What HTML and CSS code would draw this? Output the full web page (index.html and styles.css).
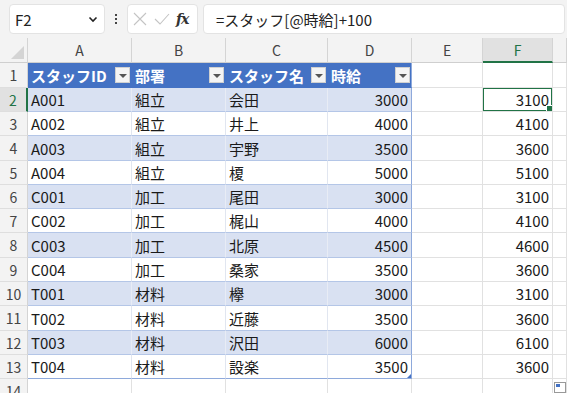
FILE: index.html
```html
<!DOCTYPE html>
<html lang="ja">
<head>
    <meta charset="UTF-8">
    <title>スタッフ</title>
    <link rel="stylesheet" href="styles.css">
</head>
<body>
    <div class="formula-bar">
        <div class="name-box">
            <span>F2</span>
            <svg width="10" height="7" viewBox="0 0 10 7"><path d="M1.5 1.5 L5 5 L8.5 1.5" fill="none" stroke="#222" stroke-width="1.6"/></svg>
        </div>
        <div class="dots"><i></i><i></i><i></i></div>
        <div class="fx-box">
            <svg width="16" height="16" viewBox="0 0 16 16"><path d="M2 2 L14 14 M14 2 L2 14" stroke="#c4c4c4" stroke-width="1.1"/></svg>
            <svg width="18" height="16" viewBox="0 0 18 16"><path d="M2 8 L7 13 L16 3" fill="none" stroke="#c4c4c4" stroke-width="1.1"/></svg>
            <span class="fx">fx</span>
        </div>
        <div class="formula">=スタッフ[@時給]+100</div>
    </div>

    <div class="sheet">
        <div class="row colhead">
            <div class="corner"><span class="tri"></span></div>
            <div>A</div><div>B</div><div>C</div><div>D</div><div>E</div><div class="sel">F</div><div></div>
        </div>

        <div class="row tall">
            <div class="rh">1</div>
            <div class="th">スタッフID<span class="filter"></span></div>
            <div class="th">部署<span class="filter"></span></div>
            <div class="th">スタッフ名<span class="filter"></span></div>
            <div class="th">時給<span class="filter"></span></div>
            <div></div><div></div><div></div>
        </div>
        <div class="row band">
            <div class="rh sel">2</div>
            <div class="t">A001</div><div class="t">組立</div><div class="t">会田</div><div class="t num">3000</div>
            <div></div><div class="num active">3100</div><div></div>
        </div>
        <div class="row">
            <div class="rh">3</div>
            <div class="t">A002</div><div class="t">組立</div><div class="t">井上</div><div class="t num">4000</div>
            <div></div><div class="num">4100</div><div></div>
        </div>
        <div class="row band tall">
            <div class="rh">4</div>
            <div class="t">A003</div><div class="t">組立</div><div class="t">宇野</div><div class="t num">3500</div>
            <div></div><div class="num">3600</div><div></div>
        </div>
        <div class="row">
            <div class="rh">5</div>
            <div class="t">A004</div><div class="t">組立</div><div class="t">榎</div><div class="t num">5000</div>
            <div></div><div class="num">5100</div><div></div>
        </div>
        <div class="row band">
            <div class="rh">6</div>
            <div class="t">C001</div><div class="t">加工</div><div class="t">尾田</div><div class="t num">3000</div>
            <div></div><div class="num">3100</div><div></div>
        </div>
        <div class="row">
            <div class="rh">7</div>
            <div class="t">C002</div><div class="t">加工</div><div class="t">梶山</div><div class="t num">4000</div>
            <div></div><div class="num">4100</div><div></div>
        </div>
        <div class="row band tall">
            <div class="rh">8</div>
            <div class="t">C003</div><div class="t">加工</div><div class="t">北原</div><div class="t num">4500</div>
            <div></div><div class="num">4600</div><div></div>
        </div>
        <div class="row">
            <div class="rh">9</div>
            <div class="t">C004</div><div class="t">加工</div><div class="t">桑家</div><div class="t num">3500</div>
            <div></div><div class="num">3600</div><div></div>
        </div>
        <div class="row band">
            <div class="rh">10</div>
            <div class="t">T001</div><div class="t">材料</div><div class="t">欅</div><div class="t num">3000</div>
            <div></div><div class="num">3100</div><div></div>
        </div>
        <div class="row tall">
            <div class="rh">11</div>
            <div class="t">T002</div><div class="t">材料</div><div class="t">近藤</div><div class="t num">3500</div>
            <div></div><div class="num">3600</div><div></div>
        </div>
        <div class="row band">
            <div class="rh">12</div>
            <div class="t">T003</div><div class="t">材料</div><div class="t">沢田</div><div class="t num">6000</div>
            <div></div><div class="num">6100</div><div></div>
        </div>
        <div class="row last">
            <div class="rh">13</div>
            <div class="t">T004</div><div class="t">材料</div><div class="t">設楽</div><div class="t num resize">3500</div>
            <div></div><div class="num">3600</div><div></div>
        </div>
        <div class="row">
            <div class="rh">14</div>
            <div></div><div></div><div></div><div></div><div></div><div></div><div class="quick"><span></span></div>
        </div>
    </div>
</body>
</html>
```

FILE: styles.css
```css
* {
    box-sizing: border-box;
}

body {
    margin: 0;
    width: 567px;
    height: 393px;
    overflow: hidden;
    background: #fff;
    font-family: "Noto Sans CJK JP", "Noto Sans", sans-serif;
    color: #1a1a1a;
}

/* 数式バー */
.formula-bar {
    height: 38px;
    background: #f3f3f3;
    display: flex;
    align-items: center;
    padding: 0 0 0 9px;
}

.name-box {
    width: 96px;
    height: 30px;
    background: #fff;
    border: 1px solid #e3e3e3;
    border-radius: 4px;
    display: flex;
    align-items: center;
    justify-content: space-between;
    padding: 0 6px 0 5px;
    font-size: 15px;
    color: #222;
}

.dots {
    width: 22px;
    display: flex;
    flex-direction: column;
    align-items: center;
    gap: 2px;
}

.dots i {
    width: 2px;
    height: 2px;
    background: #444;
}

.fx-box {
    width: 71px;
    height: 30px;
    background: #fff;
    border: 1px solid #e3e3e3;
    border-radius: 4px;
    display: flex;
    align-items: center;
    gap: 5px;
    padding: 0 0 0 4px;
}

.fx {
    font-family: "DejaVu Serif", serif;
    font-style: italic;
    font-weight: bold;
    font-size: 14px;
    color: #333;
    letter-spacing: -1px;
}

.formula {
    margin-left: 5px;
    width: 362px;
    height: 30px;
    background: #fff;
    border: 1px solid #e3e3e3;
    border-radius: 4px;
    display: flex;
    align-items: center;
    padding-left: 12px;
    font-size: 15px;
    color: #222;
}

/* シート */
.sheet {
    font-size: 15px;
}

.row {
    display: grid;
    grid-template-columns: 28px 104px 94px 102px 84px 71px 70px 14px;
    height: 24px;
}

.row.tall {
    height: 25px;
}

.row > div {
    border-right: 1px solid #e1e1e1;
    border-bottom: 1px solid #e1e1e1;
    display: flex;
    align-items: center;
    padding: 0 3px;
    white-space: nowrap;
    overflow: hidden;
}

.colhead {
    height: 25px;
    background: #f3f3f3;
}

.colhead > div {
    justify-content: center;
    font-size: 14px;
    color: #444;
    border-right-color: #d4d4d4;
    border-bottom-color: #cfcfcf;
}

.colhead > div.sel {
    background: #e1e1e1;
    color: #217346;
    border-bottom: 2px solid #217346;
}

.corner {
    position: relative;
}

.corner .tri {
    position: absolute;
    right: 3px;
    bottom: 3px;
    width: 0;
    height: 0;
    border-left: 13px solid transparent;
    border-bottom: 13px solid #d4d4d4;
}

.row > div.rh {
    background: #f3f3f3;
    justify-content: center;
    font-size: 14px;
    color: #444;
    border-right-color: #d4d4d4;
    border-bottom-color: #dedede;
    padding: 0;
}

.row > div.rh.sel {
    background: #e1e1e1;
    color: #217346;
    border-right: 2px solid #217346;
}

/* テーブル */
.row > div.th {
    background: #4472c4;
    color: #fff;
    font-weight: bold;
    border-right-color: #4472c4;
    border-bottom-color: #4472c4;
    justify-content: space-between;
    padding-right: 1px;
}

.filter {
    width: 15px;
    height: 16px;
    background: #f4f4f4;
    border: 1px solid #d0d0d0;
    position: relative;
}

.filter::after {
    content: "";
    position: absolute;
    left: 3px;
    top: 6px;
    border-left: 4px solid transparent;
    border-right: 4px solid transparent;
    border-top: 4px solid #555;
}

.row > div.t {
    border-bottom-color: #b4c6e7;
    border-right-color: #e1e6f0;
}

.band > div.t {
    background: #d9e1f2;
    border-right-color: #e8ecf5;
}

.row > div.t.num,
.row > div.th:nth-child(5) {
    border-right-color: #8ea9db;
}

.last > div.t {
    border-bottom-color: #8ea9db;
}

.num {
    justify-content: flex-end;
}

.active {
    position: relative;
}

.active::before {
    content: "";
    position: absolute;
    left: -1px;
    top: -1px;
    right: -1px;
    bottom: -1px;
    border: 2px solid #217346;
}

.active::after {
    content: "";
    position: absolute;
    right: -1px;
    bottom: -1px;
    width: 5px;
    height: 5px;
    background: #217346;
    border: 1px solid #fff;
}

.resize {
    position: relative;
}

.resize::after {
    content: "";
    position: absolute;
    right: 0;
    bottom: 0;
    border-left: 4px solid transparent;
    border-bottom: 4px solid #4472c4;
}

.quick {
    position: relative;
}

.quick span {
    position: absolute;
    left: 1px;
    top: 3px;
    width: 12px;
    height: 11px;
    border: 1px solid #999;
    background: #fff;
}

.quick span::before {
    content: "";
    position: absolute;
    left: 1px;
    top: 1px;
    width: 4px;
    height: 3px;
    background: #4472c4;
}
```
